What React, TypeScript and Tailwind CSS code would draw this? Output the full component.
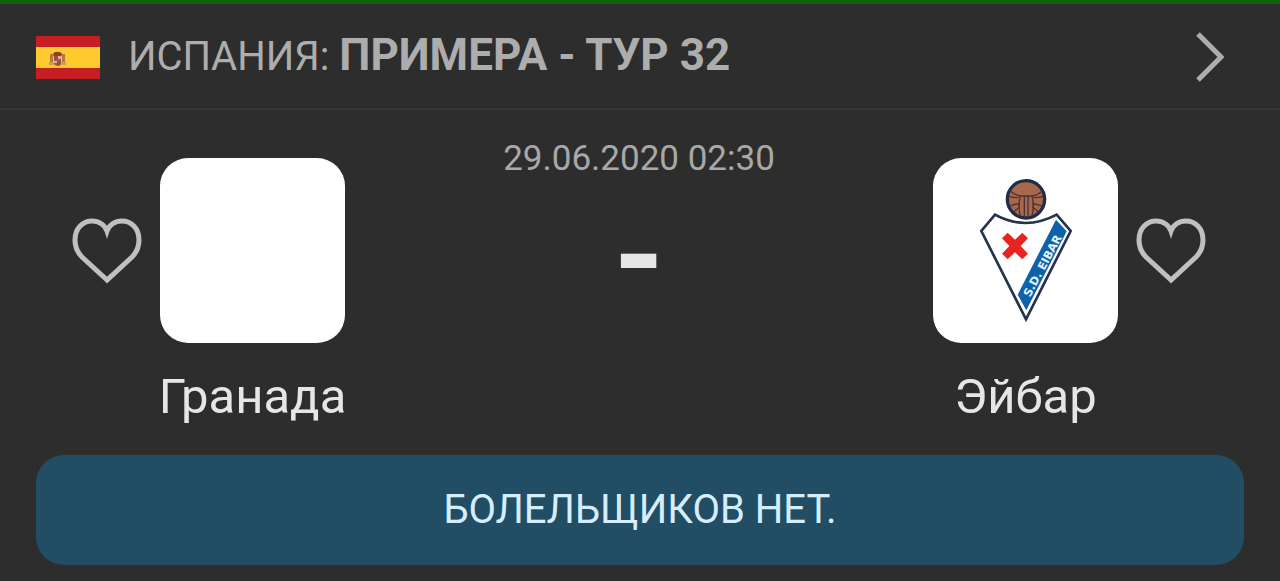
import type { ReactNode } from 'react';
import { clsx } from 'clsx';

interface TeamProps {
  name: string;
  crest?: ReactNode;
  side: 'home' | 'away';
}

function SpainFlag() {
  return (
    <svg viewBox="0 0 64 43" className="w-16 h-[43px] shrink-0" aria-hidden="true">
      <path fill="#c51f24" d="M0 0h64v43H0z" />
      <path fill="#fdcb2e" d="M0 11h64v21H0z" />
      <path fill="#b87a3a" d="M14 18h3v10h-3zM26 18h3v10h-3z" />
      <path fill="#c9a05c" d="M13 26h5v3h-5zM25 26h5v3h-5z" />
      <path fill="#9c3b24" d="M17 18c1-3 8-3 9 0l-1 3h-7z" />
      <path fill="#a94a3c" d="M18 20h7v7c0 2-1 3-3 3s-4-1-4-3z" />
      <path fill="#d8b49a" d="M22 20h3v3h-3zM18 25h3v2h-3z" />
      <path fill="#8f6a5a" d="M20 23h3v2h-3z" />
    </svg>
  );
}

function EibarCrest() {
  return (
    <svg viewBox="9 24 555 555" className="size-full" aria-hidden="true">
      <circle cx="288" cy="148" r="56" fill="#a8694a" stroke="#202d48" strokeWidth="10" />
      <g fill="none" stroke="#4a3239" strokeWidth="4">
        <path d="M241 123q12 12 30 15h35q18-3 30-15" />
        <path d="M236 139q14 4 29 4M340 139q-14 4-29 4" />
        <path d="M241 168q14-7 28-6M335 168q-14-7-28-6" />
        <path d="M251 185l18-14M325 185l-18-14" />
        <path d="M271 138q-8 30 0 60M306 138q8 30 0 60M283 138v65M294 138v65" />
      </g>
      <path
        d="M195 194Q286 244 380 194L422 243 288 508 154 243Z"
        fill="#fff"
        stroke="#24324c"
        strokeWidth="8"
      />
      <path d="M378 209L410 244 289 481 263 434Z" fill="#0d62ab" />
      <path
        d="M233 248l22 21 22-21 17 17-22 23 22 23-17 17-22-21-22 21-17-17 22-23-22-23z"
        fill="#e62520"
      />
      <text
        x="300"
        y="443"
        transform="rotate(-62 300 443)"
        fill="#e5f2fa"
        fontSize="34"
        fontWeight="700"
        className="font-['DejaVu_Sans',sans-serif]"
      >
        S.D. EIBAR
      </text>
    </svg>
  );
}

function FavoriteButton({ team }: { team: string }) {
  return (
    <button
      type="button"
      aria-label={team}
      className="flex h-[185px] w-[70px] shrink-0 cursor-pointer items-center justify-center text-[#c0c0c0]"
    >
      <svg viewBox="0 0 70 66" className="h-[66px] w-[70px]" fill="none" stroke="currentColor" strokeWidth="5">
        <path d="M35 62L10 39C4 33 3 28 3 22C3 10 11 3 20 3C27 3 33 7 35 13C37 7 43 3 50 3C59 3 67 10 67 22C67 28 66 33 60 39Z" />
      </svg>
    </button>
  );
}

function Team({ name, crest, side }: TeamProps) {
  return (
    <div className={clsx('flex gap-[18px]', side === 'away' && 'flex-row-reverse')}>
      <FavoriteButton team={name} />
      <div className="flex w-[185px] flex-col items-center">
        <div className="size-[185px] overflow-hidden rounded-[28px] bg-white">{crest}</div>
        <h2 className="mt-6 whitespace-nowrap text-[49px] leading-[60px] text-[#e6e6e6]">{name}</h2>
      </div>
    </div>
  );
}

export default function App() {
  return (
    <main className="min-h-screen border-t-4 border-[#0d650d] bg-[#2d2d2d] font-[Roboto,sans-serif]">
      {/* Tournament */}
      <a
        href="#"
        className="flex h-[106px] items-center border-b-2 border-[#353535] pt-0.5 pl-9 pr-14 text-[40px] text-[#adadad]"
      >
        <SpainFlag />
        <span className="ml-7 whitespace-nowrap">
          ИСПАНИЯ: <b className="text-[44px] leading-none font-bold">ПРИМЕРА - ТУР 32</b>
        </span>
        <svg viewBox="0 0 28 50" className="ml-auto h-[50px] w-7" fill="none" stroke="currentColor" strokeWidth="5">
          <path d="M2 2L25 25L2 48" />
        </svg>
      </a>

      {/* Match */}
      <section className="flex justify-between pt-12 pl-[72px] pr-[74px]">
        <Team name="Гранада" side="home" />
        <div className="-mt-6 flex flex-col items-center">
          <time dateTime="2020-06-29T02:30" className="whitespace-nowrap text-[35px] leading-[50px] text-[#a8a8a8]">
            29.06.2020 02:30
          </time>
          <span className="mt-6 text-[128px] font-bold leading-24 text-[#e6e6e6]">-</span>
        </div>
        <Team name="Эйбар" side="away" crest={<EibarCrest />} />
      </section>

      <p className="mx-9 mt-7 rounded-[28px] bg-[#214d65] py-6 text-center text-[40px] leading-[62px] text-[#d5eefb]">
        БОЛЕЛЬЩИКОВ НЕТ.
      </p>
    </main>
  );
}
